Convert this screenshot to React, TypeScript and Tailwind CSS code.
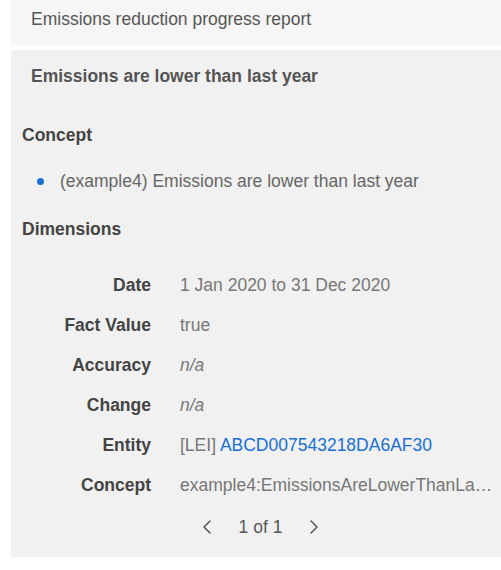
import { ChevronLeft, ChevronRight } from 'lucide-react';

const rows = [
    { label: 'Date', value: <span>1 Jan 2020 to 31 Dec 2020</span> },
    { label: 'Fact Value', value: <span>true</span> },
    { label: 'Accuracy', value: <i>n/a</i> },
    { label: 'Change', value: <i>n/a</i> },
    {
        label: 'Entity',
        value: (
            <span>
                [LEI] <span className="text-[#1a6fd1]">ABCD007543218DA6AF30</span>
            </span>
        ),
    },
    { label: 'Concept', value: <span>example4:EmissionsAreLowerThanLastYear</span> },
];

export default function App() {
    return (
        <div className="min-h-[570px] bg-white pl-[11px] font-['Liberation_Sans',Arial,sans-serif] text-[17.5px] leading-[20px]">
            {/* Report header */}
            <div className="h-[45px] bg-[#f6f6f6] pl-[20px] pt-[9px] text-[#555]">
                Emissions reduction progress report
            </div>

            {/* Fact panel */}
            <div className="mt-[5px] h-[507px] bg-[#f1f1f1]">
                <div className="pl-[20px] pt-[16px] font-bold text-[#555]">Emissions are lower than last year</div>

                <div className="pl-[11px]">
                    <h3 className="mt-[39px] font-bold text-[#444]">Concept</h3>
                    <ul className="mt-[26px] pl-[15px]">
                        <li className="flex items-center text-[#666]">
                            <span className="mr-[16px] h-[7px] w-[7px] shrink-0 rounded-full bg-[#1a6fd1]" />
                            (example4) Emissions are lower than last year
                        </li>
                    </ul>
                    <h3 className="mt-[28px] font-bold text-[#444]">Dimensions</h3>

                    <div className="mt-[36px] flex flex-col gap-[20px]">
                        {rows.map((r) => (
                            <div key={r.label} className="flex">
                                <div className="w-[129px] shrink-0 text-right font-bold text-[#444]">{r.label}</div>
                                <div className="ml-[29px] min-w-0 flex-1 truncate pr-[4px] text-[#777]">{r.value}</div>
                            </div>
                        ))}
                    </div>

                    <div className="mt-[20px] flex items-center justify-center gap-[20px] pr-[2px] text-[#555]">
                        <ChevronLeft className="h-[24px] w-[24px]" strokeWidth={1.5} />
                        <span>1 of 1</span>
                        <ChevronRight className="h-[24px] w-[24px]" strokeWidth={1.5} />
                    </div>
                </div>
            </div>
        </div>
    );
}
